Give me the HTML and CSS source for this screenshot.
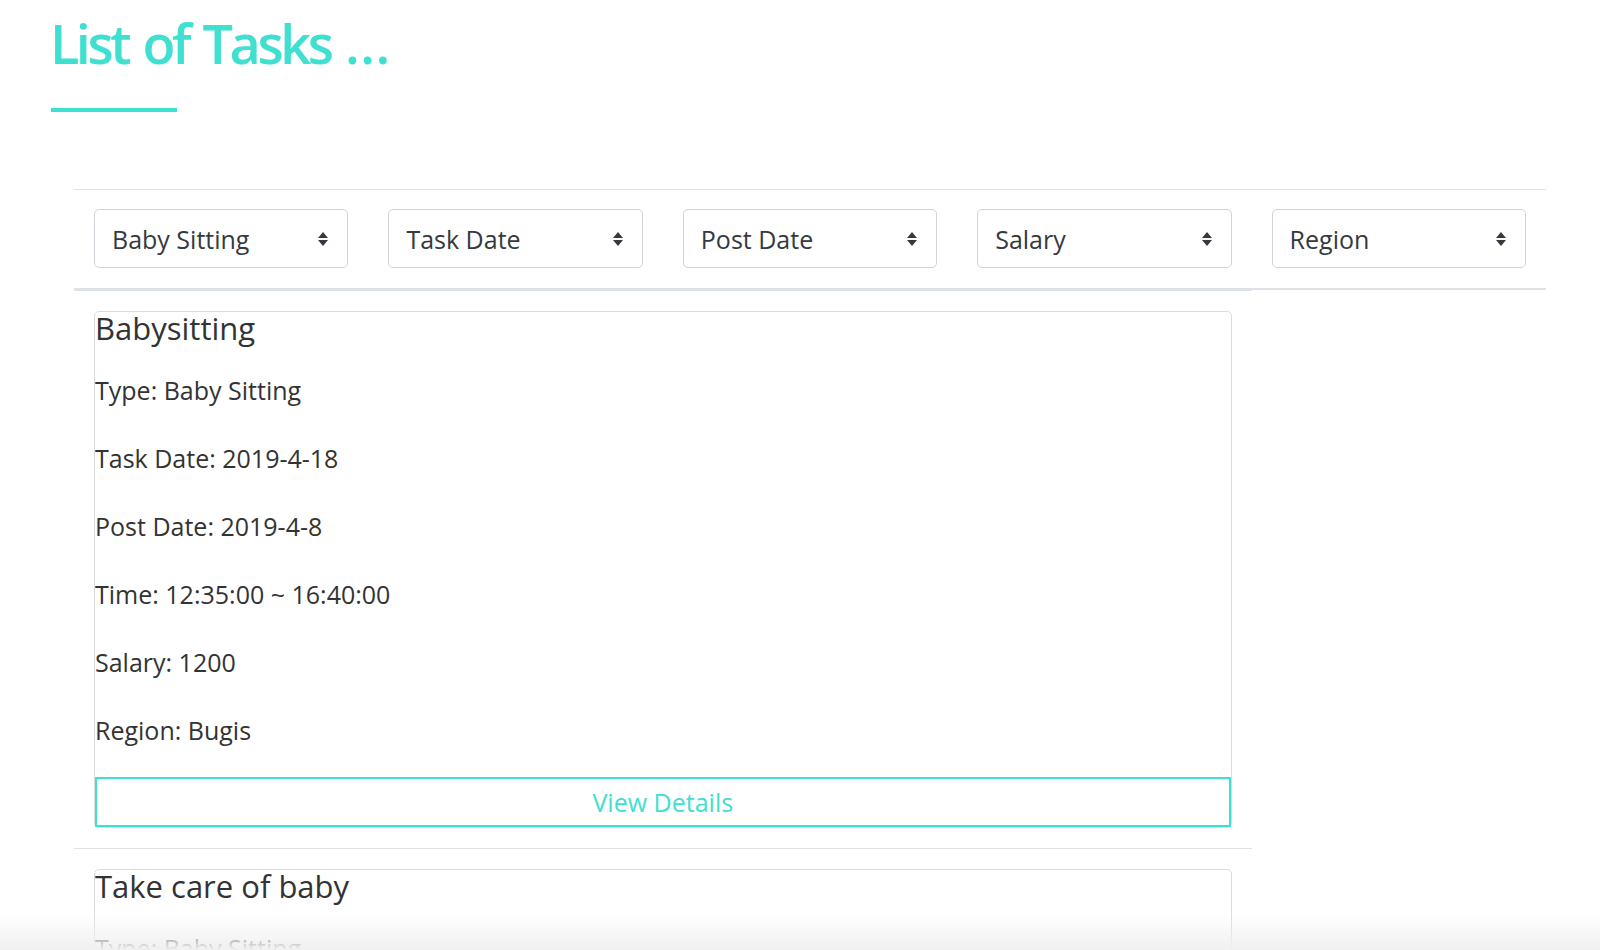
FILE: index.html
```html
<!DOCTYPE html>
<html lang="en">
<head>
<meta charset="utf-8">
<title>List of Tasks</title>
<link rel="stylesheet" href="styles.css">
</head>
<body>
<div class="page">
  <header class="page-head">
    <h1 class="page-title">List of Tasks <span class="ellipsis">...</span></h1>
    <div class="title-rule"></div>
  </header>

  <section class="task-table">
    <div class="filter-row">
      <div class="filter-cell">
        <div class="select"><span>Baby Sitting</span>
          <svg class="caret" width="12" height="16" viewBox="0 0 12 16"><path d="M6 1 L11 7 H1 Z M1 9 H11 L6 15 Z" fill="#343a40"/></svg>
        </div>
      </div>
      <div class="filter-cell">
        <div class="select"><span>Task Date</span>
          <svg class="caret" width="12" height="16" viewBox="0 0 12 16"><path d="M6 1 L11 7 H1 Z M1 9 H11 L6 15 Z" fill="#343a40"/></svg>
        </div>
      </div>
      <div class="filter-cell">
        <div class="select"><span>Post Date</span>
          <svg class="caret" width="12" height="16" viewBox="0 0 12 16"><path d="M6 1 L11 7 H1 Z M1 9 H11 L6 15 Z" fill="#343a40"/></svg>
        </div>
      </div>
      <div class="filter-cell">
        <div class="select"><span>Salary</span>
          <svg class="caret" width="12" height="16" viewBox="0 0 12 16"><path d="M6 1 L11 7 H1 Z M1 9 H11 L6 15 Z" fill="#343a40"/></svg>
        </div>
      </div>
      <div class="filter-cell">
        <div class="select"><span>Region</span>
          <svg class="caret" width="12" height="16" viewBox="0 0 12 16"><path d="M6 1 L11 7 H1 Z M1 9 H11 L6 15 Z" fill="#343a40"/></svg>
        </div>
      </div>
    </div>

    <div class="task-row">
      <div class="task-cell">
        <article class="task-card">
          <h3 class="task-title">Babysitting</h3>
          <p class="task-line">Type: Baby Sitting</p>
          <p class="task-line">Task Date: 2019-4-18</p>
          <p class="task-line">Post Date: 2019-4-8</p>
          <p class="task-line">Time: 12:35:00 ~ 16:40:00</p>
          <p class="task-line">Salary: 1200</p>
          <p class="task-line">Region: Bugis</p>
          <button class="details-btn">View Details</button>
        </article>
      </div>
    </div>

    <div class="task-row">
      <div class="task-cell">
        <article class="task-card">
          <h3 class="task-title">Take care of baby</h3>
          <p class="task-line">Type: Baby Sitting</p>
          <p class="task-line">Task Date: 2019-4-20</p>
          <p class="task-line">Post Date: 2019-4-9</p>
          <p class="task-line">Time: 09:00:00 ~ 13:00:00</p>
          <p class="task-line">Salary: 1000</p>
          <p class="task-line">Region: Bugis</p>
          <button class="details-btn">View Details</button>
        </article>
      </div>
    </div>
  </section>
</div>
<div class="bottom-fade"></div>
</body>
</html>
```

FILE: styles.css
```css
html, body {
  margin: 0;
  padding: 0;
  background: #ffffff;
  overflow: hidden;
}

body {
  font-family: "Open Sans", "Noto Sans", "Liberation Sans", sans-serif;
  color: #333333;
}

.page {
  padding: 0 0 40px 0;
}

.page-head {
  padding: 10px 0 0 51px;
}

.page-title {
  margin: 0 0 0 -1px;
  font-size: 54px;
  line-height: 67px;
  font-weight: 600;
  letter-spacing: -3.5px;
  word-spacing: 4px;
  color: #40e0d0;
}

.ellipsis {
  letter-spacing: 0.5px;
}

.title-rule {
  margin-top: 31px;
  width: 126px;
  height: 4px;
  background: #40e0d0;
}

.task-table {
  margin: 77px 0 0 74px;
  width: 1472px;
}

.filter-row {
  display: grid;
  grid-template-columns: repeat(5, 1fr);
  border-top: 1px solid #dee2e6;
  border-bottom: 2px solid #dee2e6;
}

.filter-cell {
  padding: 19px 20px 20px 20px;
}

.select {
  height: 59px;
  box-sizing: border-box;
  border: 1px solid #ced4da;
  border-radius: 5px;
  display: flex;
  align-items: center;
  justify-content: space-between;
  padding: 0 18px 0 17px;
  font-size: 25px;
  color: #343a40;
  background: #fff;
}

.caret {
  display: block;
}

.task-row {
  display: grid;
  grid-template-columns: repeat(5, 1fr);
}

.task-cell {
  grid-column: span 4;
  border-top: 1px solid #dee2e6;
  padding: 20px;
}

.task-card {
  border: 1px solid #dcdcdc;
  border-radius: 5px;
  display: flex;
  flex-direction: column;
}

.task-title {
  margin: 0 0 28px 0;
  font-size: 31px;
  line-height: 32px;
  font-weight: 400;
  color: #333333;
}

.task-line {
  margin: 0 0 32px 0;
  font-size: 25px;
  line-height: 36px;
}

.task-line:last-of-type {
  margin-bottom: 29px;
}

.details-btn {
  height: 50px;
  border: 2px solid #40e0d0;
  background: #ffffff;
  color: #40e0d0;
  font-family: inherit;
  font-size: 25px;
  padding: 0;
  border-radius: 0;
}

.bottom-fade {
  position: fixed;
  left: 0;
  right: 0;
  bottom: 0;
  height: 36px;
  background: linear-gradient(to bottom, rgba(242, 242, 242, 0), #f0f0f0);
  pointer-events: none;
}
```
